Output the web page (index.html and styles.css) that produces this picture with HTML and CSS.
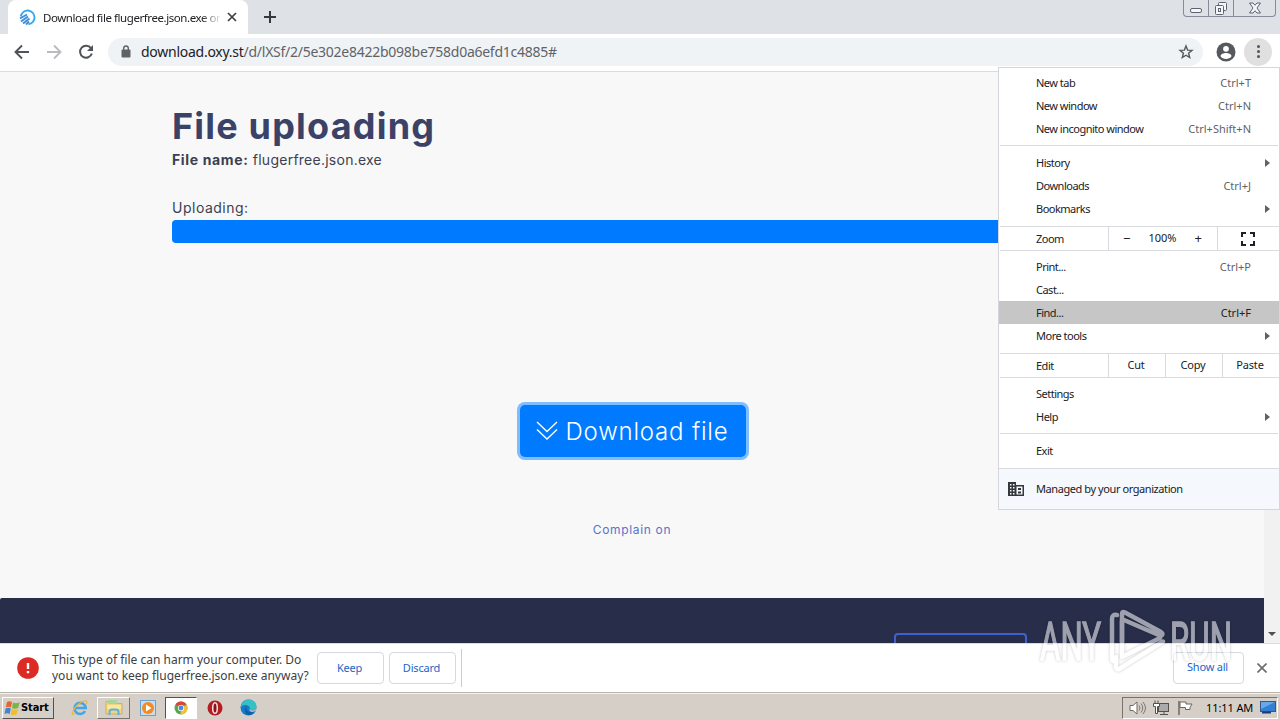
FILE: index.html
```
<!DOCTYPE html>
<html lang="en">
<head>
    <meta charset="UTF-8">
    <title>Download file flugerfree.json.exe</title>
    <link rel="stylesheet" href="styles.css">
</head>
<body>
    <div class="desktop">
        <!-- Tab strip -->
        <div class="tabstrip">
            <div class="tab">
                <svg class="favicon" width="17" height="17" viewBox="0 0 17 17">
                    <path d="M1.800 7.500A6.900 6.900 0 1 1 9.500 15.300" fill="none" stroke="#38a9ee" stroke-width="1.900"/>
                    <path d="M1 9.500L8 5.500M2 12.500L9 7.500M4 14.500L10.500 9.500M7 15.500L10 12.500" stroke="#3d8fdc" stroke-width="2"/>
                </svg>
                <span class="tab-title">Download file flugerfree.json.exe on</span>
                <svg class="tab-close" width="10" height="10" viewBox="0 0 10 10"><path d="M1 1l8 8M9 1L1 9" stroke="#3c4043" stroke-width="1.7"/></svg>
            </div>
            <svg class="new-tab" width="12" height="12" viewBox="0 0 12 12"><path d="M6 0v12M0 6h12" stroke="#35383c" stroke-width="2"/></svg>
            <div class="window-buttons">
                <span class="wb"><svg width="12" height="14" viewBox="0 0 12 14"><rect x=".5" y="8.500" width="11" height="4" rx="1.500" fill="#f4f6f9" stroke="#5d6471"/></svg></span>
                <span class="wb"><svg width="14" height="15" viewBox="0 0 14 15"><g fill="#f4f6f9" stroke="#5d6471"><rect x="4.500" y="2.500" width="8" height="8" rx="1"/><rect x="1.500" y="5.500" width="8" height="9" rx="1"/><rect x="4.500" y="8.500" width="2" height="3"/></g></svg></span>
                <span class="wb wb-close"><svg width="12" height="12" viewBox="0 0 12 12"><path d="M.5 1h3.500L6 3.300 8 1h3.500L8 6l3.500 5H8L6 8.700 4 11H.5L4 6z" fill="#f4f6f9" stroke="#5d6471"/></svg></span>
            </div>
        </div>

        <!-- Address bar -->
        <div class="toolbar">
            <svg class="nav" width="16" height="16" viewBox="0 0 16 16"><path d="M15 8H2M8 1.500L1.500 8 8 14.500" fill="none" stroke="#505357" stroke-width="1.900"/></svg>
            <svg class="nav" width="16" height="16" viewBox="0 0 16 16"><path d="M1 8h13M8 1.500L14.500 8 8 14.500" fill="none" stroke="#b9bbbe" stroke-width="1.900"/></svg>
            <svg class="nav" width="16" height="16" viewBox="0 0 16 16"><path d="M13 4.300A6 6 0 1 0 13.800 9.500" fill="none" stroke="#505357" stroke-width="2"/><path d="M15 1v6H9z" fill="#505357"/></svg>
            <div class="omnibox">
                <svg class="lock" width="10" height="13" viewBox="0 0 10 13"><rect x=".5" y="4.500" width="9" height="8" rx="1" fill="#5f6368"/><path d="M2.700 5V3.300a2.300 2.300 0 0 1 4.600 0V5" fill="none" stroke="#5f6368" stroke-width="1.400"/></svg>
                <span class="url"><b>download.oxy.st</b>/d/lXSf/2/5e302e8422b098be758d0a6efd1c4885#</span>
                <svg class="star" width="16" height="16" viewBox="0 0 16 16"><path d="M8 2l1.600 4.100 4.400.3-3.400 2.800 1.100 4.300L8 11.200l-3.700 2.300 1.100-4.300L2 6.400l4.400-.3z" fill="none" stroke="#55585c" stroke-width="1.400"/></svg>
            </div>
            <svg class="profile" width="20" height="20" viewBox="0 0 20 20"><circle cx="10" cy="10" r="9.500" fill="#55585c"/><circle cx="10" cy="6.800" r="2.900" fill="#fff"/><path d="M4.500 14.200c0-2.200 3.300-3.200 5.500-3.200s5.500 1 5.500 3.200a6.700 6.700 0 0 1-11 0z" fill="#fff"/></svg>
            <div class="kebab"><i></i><i></i><i></i></div>
        </div>

        <!-- Page content -->
        <div class="viewport">
            <div class="page">
                <div class="content">
                    <h1>File uploading</h1>
                    <p class="file-name"><b>File name:</b> <span>flugerfree.json.exe</span></p>
                    <p class="uploading">Uploading:</p>
                    <div class="progress"></div>
                    <button class="download">
                        <svg width="22" height="20" viewBox="0 0 22 20"><path d="M1 1l10 9.500L21 1M1 8.500L11 18l10-9.500" fill="none" stroke="#fff" stroke-width="1.400"/></svg>
                        <span>Download file</span>
                    </button>
                    <a class="complain">Complain on</a>
                </div>
                <div class="footer"><div class="footer-box"></div></div>
            </div>
            <div class="scrollbar"><i class="scroll-down"></i></div>
        </div>

        <!-- Download shelf -->
        <div class="shelf">
            <svg class="warning" width="22" height="22" viewBox="0 0 22 22"><circle cx="11" cy="11" r="10.800" fill="#dc2b24"/><path d="M11 6v6M11 14v2.300" stroke="#fff" stroke-width="2.400"/></svg>
            <p class="shelf-text">This type of file can harm your computer. Do<br>you want to keep flugerfree.json.exe anyway?</p>
            <button class="shelf-button keep">Keep</button>
            <button class="shelf-button discard">Discard</button>
            <span class="shelf-divider"></span>
            <button class="shelf-button show-all">Show all</button>
            <svg class="shelf-close" width="10" height="10" viewBox="0 0 10 10"><path d="M.5.5l9 9M9.500.5l-9 9" stroke="#686b6f" stroke-width="1.600"/></svg>
        </div>

        <!-- Windows taskbar -->
        <div class="taskbar">
            <div class="start">
                <svg width="17" height="16" viewBox="0 0 16 16"><path d="M2.500 2Q5 .5 7.500 2L6.500 7.500Q4 6 1.300 7.500z" fill="#e8642b"/><path d="M8.500 2.500Q11 4 15 2.300L13.800 7.800Q10.500 9.500 7.500 8z" fill="#78b543"/><path d="M1.100 8.500Q4 7 6.300 8.500L5.100 14Q3 12.500 0 14z" fill="#4184cf"/><path d="M7.300 9Q10 10.500 13.500 8.800L12.200 14.300Q9 16 6 14.500z" fill="#f0bd32"/></svg>
                <span>Start</span>
            </div>
            <div class="task ie">
                <svg width="18" height="18" viewBox="0 0 18 18"><path d="M14 12.200A5.600 5.600 0 1 1 14.700 9H4" fill="none" stroke="#46a5e2" stroke-width="2.600"/><path d="M3.500 14.500C-.5 18 1 11 6.500 6S17.500 0 15.500 5" fill="none" stroke="#e8b93c" stroke-width="1.200"/></svg>
            </div>
            <div class="task raised">
                <svg width="18" height="17" viewBox="0 0 18 17"><path d="M1 2.500h6l1.500 2H17V15H1z" fill="#f0d67a" stroke="#c9a548" stroke-width=".7"/><path d="M3 1h9v4H3z" fill="#a8d59b"/><path d="M2 6h14v4H2z" fill="#f8e8a6"/><path d="M4.500 16v-3q0-2.500 2.500-2.500h4q2.500 0 2.500 2.500v3" fill="none" stroke="#61afe2" stroke-width="2"/></svg>
            </div>
            <div class="task">
                <svg width="16" height="16" viewBox="0 0 16 16"><rect x=".5" y=".5" width="15" height="15" fill="#c7def2" stroke="#6aa1d4"/><circle cx="8" cy="8" r="6" fill="#f18b22"/><path d="M6 4.500l5.500 3.500L6 11.500z" fill="#fff"/></svg>
            </div>
            <div class="task pressed">
                <svg width="14" height="14" viewBox="0 0 14 14"><circle cx="7" cy="7" r="6.500" fill="#55a84f"/><path d="M7 7L1.400 3.600A6.500 6.500 0 0 1 12.700 3.800H7z" fill="#dd4437"/><path d="M7 7l5.700-3.200A6.500 6.500 0 0 1 6.500 13.500z" fill="#f3c234"/><circle cx="7" cy="7" r="3.100" fill="#fff"/><circle cx="7" cy="7" r="2.400" fill="#4a86e8"/></svg>
            </div>
            <div class="task">
                <svg width="16" height="16" viewBox="0 0 16 16"><circle cx="8" cy="8" r="7.500" fill="#b51c20"/><ellipse cx="8" cy="8" rx="2.300" ry="5.300" fill="#8c1216" stroke="#f4dcdc" stroke-width="1.600"/></svg>
            </div>
            <div class="task">
                <svg width="17" height="17" viewBox="0 0 17 17"><circle cx="8.500" cy="8.500" r="8" fill="#1679c9"/><path d="M.8 8C1.500 3 5 .5 8.500.5c5 0 8 3.500 8 7 0 3-2.500 4-4.500 4-2.500 0-3-1.200-2-2.200C10 6 4 4.500.8 8z" fill="#36c0c4"/><path d="M6.500 7c-1.500 4 2.500 7.500 7.500 5.500 0 0-2 3.500-5 3.500-4 0-5.500-6-2.500-9z" fill="#115da8"/><path d="M10 9.300c-1 1-.5 2.200 2 2.200 2 0 4-.7 4.400-2.500l-.8 3c-4 2-7.600 0-5.600-2.700z" fill="#d6d2c9"/></svg>
            </div>
            <div class="tray">
                <svg width="17" height="16" viewBox="0 0 17 16"><path d="M1 5.500h3L8 2v12L4 10.500H1z" fill="#fff" stroke="#6d6a64"/><path d="M10 5.500q2 2.500 0 5M12 3.500q3.500 4.500 0 9M14 2q5 6 0 12" fill="none" stroke="#7c7973"/></svg>
                <svg width="17" height="16" viewBox="0 0 17 16"><rect x="5.500" y="3.500" width="10" height="8" fill="#aaa" stroke="#55524e"/><path d="M7 14.500h8M11 12v2" stroke="#55524e"/><path d="M.5 3.500h6v3h-2v7h-2v-7h-2zM2 .5v3M5 .5v3" fill="#fff" stroke="#55524e"/></svg>
                <svg width="17" height="16" viewBox="0 0 17 16"><path d="M2 1v14" stroke="#6b6862" stroke-width="1.500"/><path d="M3 2h6v2h6l-2 3.500v2H8.500v-2H3z" fill="#fff" stroke="#6b6862"/></svg>
                <span class="clock">11:11 AM</span>
                <svg class="show-desktop" width="16" height="13" viewBox="0 0 16 13"><rect x=".5" y=".5" width="15" height="10" fill="#347fd2" stroke="#345987"/><path d="M1 1h14L1 8z" fill="#65a9eb"/><path d="M2 11.500h9" stroke="#173e76" stroke-width="2"/></svg>
            </div>
        </div>

        <!-- Browser menu -->
        <div class="menu">
            <div class="item"><span>New tab</span><em>Ctrl+T</em></div>
            <div class="item"><span>New window</span><em>Ctrl+N</em></div>
            <div class="item"><span>New incognito window</span><em>Ctrl+Shift+N</em></div>
            <hr>
            <div class="item submenu"><span>History</span></div>
            <div class="item"><span>Downloads</span><em>Ctrl+J</em></div>
            <div class="item submenu"><span>Bookmarks</span></div>
            <div class="row">
                <span class="row-label">Zoom</span>
                <span class="zoom-controls"><i>−</i><span>100%</span><i>+</i></span>
                <span class="fullscreen"><svg width="14" height="14" viewBox="0 0 14 14"><path d="M1 5V1h4M9 1h4v4M13 9v4H9M5 13H1V9" fill="none" stroke="#202124" stroke-width="2"/></svg></span>
            </div>
            <div class="item"><span>Print...</span><em>Ctrl+P</em></div>
            <div class="item"><span>Cast...</span></div>
            <div class="item selected"><span>Find...</span><em>Ctrl+F</em></div>
            <div class="item submenu"><span>More tools</span></div>
            <div class="row">
                <span class="row-label">Edit</span>
                <span class="edit-cell">Cut</span>
                <span class="edit-cell">Copy</span>
                <span class="edit-cell">Paste</span>
            </div>
            <div class="item"><span>Settings</span></div>
            <div class="item submenu"><span>Help</span></div>
            <hr>
            <div class="item"><span>Exit</span></div>
            <div class="managed">
                <svg width="16" height="14" viewBox="0 0 16 14"><path d="M0 0h8v3h8v11H0z" fill="#35383c"/><path d="M2 2h1.500v1.500H2zM5 2h1.500v1.500H5zM2 5h1.500v1.500H2zM5 5h1.500v1.500H5zM2 8h1.500v1.500H2zM5 8h1.500v1.500H5zM2 11h1.500v1.500H2zM5 11h1.500v1.500H5zM8.500 4.500h6v8h-6z" fill="#f5f8fc"/><path d="M10 6h3v2h-3zM10 9.500h3v2h-3z" fill="#35383c"/></svg>
                <span>Managed by your organization</span>
            </div>
        </div>

        <!-- Watermark -->
        <svg class="watermark" width="210" height="70" viewBox="0 0 210 70">
            <g class="mark-text">
                <text x="10" y="53" textLength="61" lengthAdjust="spacingAndGlyphs">ANY</text>
                <text x="140" y="53" textLength="62" lengthAdjust="spacingAndGlyphs">RUN</text>
            </g>
            <g class="mark-logo">
                <path d="M92 35V7q0-3 3-1.500L131 25q3 2 0 4L94 13"/>
                <path d="M87 8q-5-1-5 4v40q0 3 3 2"/>
                <path d="M92 14v36l38-19M86 50v9q0 5 4 2.500l43-27"/>
            </g>
        </svg>
    </div>
</body>
</html>
```

FILE: styles.css
```
* {
    box-sizing: border-box;
}

body {
    margin: 0;
    overflow: hidden;
    font-family: "Noto Sans", "Open Sans", sans-serif;
    font-size: 11px;
    color: #202124;
}

p, h1 {
    margin: 0;
}

svg {
    display: block;
    flex: none;
}

button {
    font-family: inherit;
    padding: 0;
}

.desktop {
    position: relative;
    display: flex;
    flex-direction: column;
    width: 1280px;
    height: 720px;
    white-space: nowrap;
}

/* Tab strip */
.tabstrip {
    display: flex;
    height: 34px;
    background: #dee1e6;
    padding-left: 8px;
}

.tab {
    display: flex;
    align-items: center;
    width: 240px;
    height: 34px;
    padding-left: 11px;
    background: #fff;
    border-radius: 8px 8px 0 0;
}

.tab-title {
    width: 177px;
    margin-left: 7px;
    overflow: hidden;
    font-size: 11.5px;
    letter-spacing: -0.43px;
    mask-image: linear-gradient(to right, #000 158px, transparent 179px);
}

.tab-close {
    margin-left: 7px;
}

.new-tab {
    margin: 11px 0 0 16px;
}

.window-buttons {
    display: flex;
    width: 93px;
    height: 17px;
    margin-left: auto;
    margin-right: 4px;
    border: 1px solid #858b98;
    border-top: 0;
    border-radius: 0 0 4px 4px;
}

.wb {
    display: flex;
    justify-content: center;
    width: 25px;
    border-right: 1px solid #858b98;
}

.wb-close {
    flex: 1;
    padding-top: 2px;
    border-right: 0;
}

/* Address bar */
.toolbar {
    display: flex;
    align-items: center;
    height: 38px;
    padding: 0 8px 2px 14px;
    background: #fff;
    border-bottom: 1px solid #dadce0;
}

.nav {
    margin-right: 16px;
}

.omnibox {
    display: flex;
    align-items: center;
    width: 1095px;
    height: 28px;
    margin-left: -2px;
    padding: 0 9px 0 13px;
    background: #f0f3f6;
    border-radius: 14px;
}

.url {
    margin-left: 10px;
    font-size: 14px;
    letter-spacing: -0.26px;
    color: #5f6368;
}

.url b {
    font-weight: 400;
    color: #202124;
}

.star {
    margin-left: auto;
}

.profile {
    margin-left: 13px;
}

.kebab {
    display: flex;
    flex-direction: column;
    align-items: center;
    justify-content: center;
    gap: 2px;
    width: 28px;
    height: 28px;
    margin-left: 8px;
    background: #e0e0e1;
    border-radius: 50%;
}

.kebab i {
    width: 3px;
    height: 3px;
    background: #505357;
    border-radius: 50%;
}

/* Page */
.viewport {
    display: flex;
    height: 571px;
}

.page {
    display: flex;
    flex-direction: column;
    width: 1264px;
    background: #f8f8f8;
    font-family: Inter, Lato, sans-serif;
}

.content {
    display: flex;
    flex-direction: column;
    height: 526px;
    padding: 32px 172px 0;
    color: #3d3f52;
}

h1 {
    height: 46px;
    font-size: 36px;
    line-height: 45px;
    font-weight: 700;
    letter-spacing: 1.2px;
    color: #3b4268;
}

.file-name {
    height: 20px;
    font-size: 14px;
    line-height: 20px;
    letter-spacing: 0.25px;
}

.file-name b {
    letter-spacing: 0.65px;
}

.uploading {
    height: 20px;
    margin-top: 28px;
    font-size: 14px;
    line-height: 20px;
    letter-spacing: 0.5px;
}

.progress {
    height: 23px;
    margin-top: 2px;
    background: #007bff;
    border-radius: 4px;
}

.download {
    display: flex;
    align-items: center;
    gap: 8px;
    align-self: center;
    width: 226px;
    height: 52px;
    margin-top: 162px;
    margin-left: 1px;
    padding-left: 16px;
    background: #007bff;
    border: 0;
    border-radius: 5px;
    box-shadow: 0 0 0 3px #80bdff;
    color: #fff;
    font-size: 24px;
    font-weight: 300;
    letter-spacing: 0.8px;
}

.complain {
    align-self: center;
    margin-top: 64px;
    font-size: 12px;
    line-height: 18px;
    letter-spacing: 0.65px;
    color: #5b72c9;
}

.footer {
    height: 45px;
    padding: 35px 237px 0 0;
    background: #282e4a;
    border-radius: 2px 0 0 0;
}

.footer-box {
    width: 133px;
    height: 10px;
    margin-left: auto;
    border: 2px solid #3f5fd4;
    border-bottom: 0;
    border-radius: 4px 4px 0 0;
}

.scrollbar {
    display: flex;
    align-items: flex-end;
    justify-content: center;
    width: 16px;
    padding-bottom: 7px;
    background: #f1f1f1;
}

.scroll-down {
    border: 4px solid transparent;
    border-top-color: #505050;
    border-bottom: 0;
}

/* Download shelf */
.shelf {
    display: flex;
    align-items: center;
    height: 49px;
    padding: 0 13px 0 17px;
    background: #fff;
    border-top: 1px solid #dadce0;
}

.shelf-text {
    width: 265px;
    margin-left: 13px;
    font-size: 12px;
    line-height: 16px;
    color: #3c4043;
}

.shelf-button {
    width: 67px;
    height: 32px;
    padding: 0 2px 2px 0;
    background: #fff;
    border: 1px solid #d5d9e0;
    border-radius: 4px;
    font-size: 11px;
    letter-spacing: -0.2px;
    color: #1a66c9;
}

.discard {
    margin-left: 5px;
}

.shelf-divider {
    width: 1px;
    height: 38px;
    margin-left: 5px;
    background: #c9ccd1;
}

.show-all {
    width: 71px;
    margin-left: auto;
    padding-bottom: 3px;
}

.shelf-close {
    margin-left: 13px;
}

/* Taskbar */
.taskbar {
    display: flex;
    align-items: center;
    height: 28px;
    padding: 3px 2px 1px 2px;
    background: #d5cfc7;
    border-top: 1px solid #b9b5ac;
    box-shadow: inset 0 1px #f3f1ed;
}

.start {
    display: flex;
    align-items: center;
    width: 52px;
    height: 22px;
    padding-left: 1px;
    border: 1px solid;
    border-color: #fff #55524d #55524d #fff;
    font: bold 11px "DejaVu Sans Condensed", "DejaVu Sans", sans-serif;
    color: #000;
}

.start span {
    letter-spacing: -0.1px;
}

.task {
    display: flex;
    align-items: center;
    justify-content: center;
    width: 33px;
    height: 22px;
    margin-right: 1px;
}

.ie {
    margin-left: 9px;
}

.raised {
    border: 1px solid;
    border-color: #fff #77736d #77736d #fff;
}

.pressed {
    width: 32px;
    background: #fff;
    border: 1px solid;
    border-color: #55524d #fff #fff #55524d;
}

.tray {
    display: flex;
    align-items: center;
    gap: 7px;
    width: 156px;
    height: 22px;
    margin-left: auto;
    padding-left: 6px;
    border: 1px solid;
    border-color: #77736d #fff #fff #77736d;
    color: #000;
}

.clock {
    width: 47px;
    margin: 0 0 1px 5px;
    letter-spacing: -0.1px;
}

/* Browser menu */
.menu {
    position: absolute;
    left: 998px;
    top: 67px;
    width: 282px;
    height: 443px;
    padding-top: 3px;
    background: #fff;
    border: 1px solid #d3d6da;
    letter-spacing: -0.5px;
}

.item {
    display: flex;
    align-items: center;
    justify-content: space-between;
    height: 23px;
    padding: 0 28px 0 37px;
}

.item em {
    font-style: normal;
    letter-spacing: 0;
    color: #5f6368;
}

.submenu {
    padding-right: 9px;
}

.submenu::after {
    content: "";
    border: 4px solid transparent;
    border-left: 5px solid #606366;
    border-right: 0;
}

.selected {
    background: #c6c6c6;
}

.selected em {
    color: #202124;
}

.menu hr {
    height: 1px;
    margin: 5px 1px;
    border: 0;
    background: #d9dbdf;
}

.row {
    display: flex;
    height: 25px;
    margin: 6px 0 4px 1px;
    border: 1px solid #d9dbdf;
    border-left: 0;
    border-right: 0;
    line-height: 23px;
}

.row-label {
    width: 108px;
    padding-left: 36px;
}

.zoom-controls {
    display: flex;
    justify-content: space-between;
    width: 109px;
    padding: 0 15px 0 14px;
    border-left: 1px solid #d9dbdf;
    line-height: 22px;
    letter-spacing: 0;
}

.zoom-controls i {
    font-style: normal;
    font-size: 13px;
}

.fullscreen {
    display: flex;
    flex: 1;
    align-items: center;
    justify-content: center;
    padding-right: 2px;
    border-left: 1px solid #d9dbdf;
}

.edit-cell {
    flex: 1;
    padding-right: 2px;
    border-left: 1px solid #d9dbdf;
    line-height: 21px;
    letter-spacing: -0.2px;
    text-align: center;
}

.managed {
    display: flex;
    align-items: center;
    gap: 12px;
    height: 41px;
    margin-top: 6px;
    padding: 0 0 1px 9px;
    background: #f5f8fc;
    border-top: 1px solid #d9dbdf;
    letter-spacing: -0.42px;
}

/* Watermark over the lower right corner */
.watermark {
    position: absolute;
    left: 1030px;
    top: 607px;
    opacity: 0.55;
    filter: drop-shadow(0 0 1.5px rgba(0, 0, 0, 0.4));
}

.mark-text {
    font-family: Roboto, sans-serif;
    font-size: 53px;
    fill: #fff;
    stroke: #fff;
    stroke-width: 1.5;
}

.mark-logo {
    fill: none;
    stroke: #fff;
    stroke-width: 4.5;
    stroke-linejoin: round;
    stroke-linecap: round;
}
```
